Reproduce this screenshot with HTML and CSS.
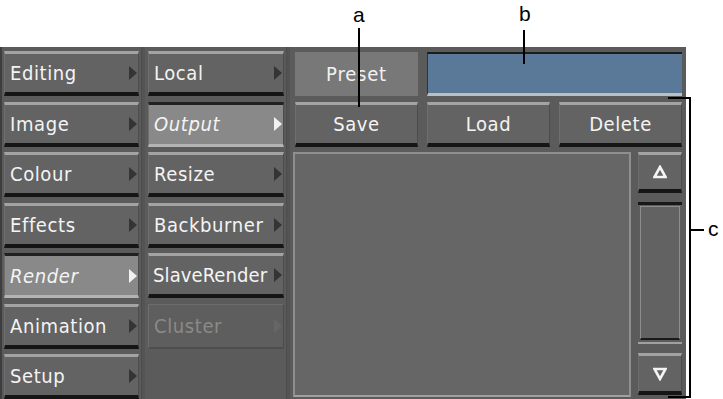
FILE: index.html
```html
<!DOCTYPE html>
<html lang="en">
<head>
  <meta charset="UTF-8">
  <meta name="viewport" content="width=device-width, initial-scale=1.0">
  <title>Output Presets</title>
  <link rel="stylesheet" href="styles.css">
</head>

<body>
  <div class="figure">
    <div class="panel">
      <div class="menu-col">
        <div class="btn"><span>Editing</span><i class="arrow"></i></div>
        <div class="btn"><span>Image</span><i class="arrow"></i></div>
        <div class="btn"><span>Colour</span><i class="arrow"></i></div>
        <div class="btn"><span>Effects</span><i class="arrow"></i></div>
        <div class="btn selected"><span>Render</span><i class="arrow"></i></div>
        <div class="btn"><span>Animation</span><i class="arrow"></i></div>
        <div class="btn"><span>Setup</span><i class="arrow"></i></div>
      </div>

      <div class="menu-col">
        <div class="btn"><span>Local</span><i class="arrow"></i></div>
        <div class="btn selected"><span>Output</span><i class="arrow"></i></div>
        <div class="btn"><span>Resize</span><i class="arrow"></i></div>
        <div class="btn"><span>Backburner</span><i class="arrow"></i></div>
        <div class="btn tight"><span>SlaveRender</span><i class="arrow"></i></div>
        <div class="btn disabled"><span>Cluster</span><i class="arrow"></i></div>
      </div>

      <div class="preset-col">
        <div class="preset-row">
          <div class="preset-label">Preset</div>
          <div class="preset-field"></div>
        </div>
        <div class="action-row">
          <div class="btn center"><span>Save</span></div>
          <div class="btn center"><span>Load</span></div>
          <div class="btn center"><span>Delete</span></div>
        </div>
        <div class="list-row">
          <div class="preset-list"></div>
          <div class="scroll">
            <div class="btn center">
              <svg width="14" height="14" viewBox="0 0 14 14"><path d="M7 2 L12.5 12 L1.5 12 Z" fill="none" stroke="#f4f4f4" stroke-width="2.6" stroke-linejoin="miter"/></svg>
            </div>
            <div class="scroll-track"><div class="scroll-thumb"></div></div>
            <div class="btn center">
              <svg width="14" height="14" viewBox="0 0 14 14"><path d="M1.5 2 L12.5 2 L7 12 Z" fill="none" stroke="#f4f4f4" stroke-width="2.6" stroke-linejoin="miter"/></svg>
            </div>
          </div>
        </div>
      </div>
    </div>

    <!-- callouts -->
    <span class="callout callout-a">a</span>
    <span class="leader leader-a"></span>
    <span class="callout callout-b">b</span>
    <span class="leader leader-b"></span>
    <span class="bracket"></span>
    <span class="leader leader-c"></span>
    <span class="callout callout-c">c</span>
  </div>
</body>
</html>
```

FILE: styles.css
```css
body {
  margin: 0;
  background-color: #fff;
  font-family: "DejaVu Sans Condensed", "DejaVu Sans", sans-serif;
}

.figure {
  position: relative;
  width: 723px;
  height: 399px;
  overflow: hidden;
}

.panel {
  margin-top: 47px;
  width: 686px;
  height: 352px;
  box-sizing: border-box;
  background-color: #5b5b5b;
  border-left: 2px solid #3e3e3e;
  padding: 4px 4px 0 2px;
  display: grid;
  grid-template-columns: 135px 136px 1fr;
  column-gap: 9px;
}

.menu-col {
  display: grid;
  grid-template-rows: repeat(7, 45px);
  grid-template-columns: minmax(0, 1fr);
  row-gap: 5.5px;
  position: relative;
}

.menu-col::after {
  content: '';
  position: absolute;
  top: -4px;
  bottom: 0;
  right: -6px;
  width: 3px;
  background-color: #545454;
  border-left: 1px solid #4c4c4c;
}

.btn {
  box-sizing: border-box;
  min-width: 0;
  height: 45px;
  display: flex;
  align-items: center;
  justify-content: space-between;
  padding: 0 1px 0 5px;
  background-color: #636363;
  border-top: 3px solid #a3a3a3;
  border-bottom: 4px solid #151515;
  border-left: 1px solid #6e6e6e;
  border-right: 1px solid #4c4c4c;
  color: #f4f4f4;
  font-size: 20px;
  letter-spacing: 0.6px;
  white-space: nowrap;
  overflow: hidden;
}

.btn.tight {
  letter-spacing: 0.1px;
  padding-left: 4px;
}

.btn.center {
  justify-content: center;
  padding: 0;
}

.btn.selected {
  background-color: #898989;
  border-top: 3px solid #202020;
  border-bottom: 3px solid #b4b4b4;
  font-style: italic;
}

.btn.disabled {
  background-color: #5e5e5e;
  border-top: 1px solid #6c6c6c;
  border-bottom: 2px solid #4e4e4e;
  color: #8a8a8a;
}

.arrow {
  flex-shrink: 0;
  width: 0;
  height: 0;
  border-left: 8px solid #343434;
  border-top: 7px solid transparent;
  border-bottom: 7px solid transparent;
}

.selected .arrow {
  border-left-color: #f2f2f2;
}

.disabled .arrow {
  border-left-color: #666;
}

.preset-col {
  display: grid;
  grid-template-rows: 44px 45px 1fr;
  row-gap: 5.5px;
  margin-top: 1px;
}

.preset-row,
.action-row {
  display: grid;
  grid-template-columns: 1fr 1fr 1fr;
  column-gap: 9px;
  padding-left: 2px;
}

.preset-label {
  display: flex;
  align-items: center;
  justify-content: center;
  background-color: #787878;
  color: #f2f2f2;
  font-size: 20px;
  letter-spacing: 0.8px;
}

.preset-field {
  grid-column: span 2;
  box-sizing: border-box;
  background-color: #5a7998;
  border-top: 2px solid #1c1c1c;
  border-bottom: 3px solid #b9c0c4;
  border-left: 1px solid #333;
}

.list-row {
  display: grid;
  grid-template-columns: 338px 1fr;
  column-gap: 7px;
  height: 245px;
}

.preset-list {
  box-sizing: border-box;
  background-color: #666;
  border: 2px solid #8f8f8f;
  border-bottom-color: #a0a0a0;
}

.scroll {
  display: grid;
  grid-template-rows: 41px 1fr 42px;
  row-gap: 9px;
  padding-bottom: 2px;
}

.scroll .btn {
  height: auto;
}

.scroll-track {
  box-sizing: border-box;
  background-color: #5c5c5c;
  border-top: 3px solid #181818;
  border-bottom: 2px solid #a0a0a0;
  padding: 1px 2px 2px 2px;
  display: flex;
}

.scroll-thumb {
  flex: 1;
  background-color: #626262;
  border: 1px solid #8c8c8c;
  border-bottom: 2px solid #1a1a1a;
}

.callout {
  position: absolute;
  font-family: "Liberation Sans", Arial, sans-serif;
  font-size: 21px;
  line-height: 1;
  color: #000;
}

.callout-a { left: 353px; top: 4px; }
.callout-b { left: 519px; top: 3px; }
.callout-c { left: 708px; top: 218px; }

.leader {
  position: absolute;
  background-color: #000;
}

.leader-a { left: 358px; top: 28px; width: 2px; height: 79px; }
.leader-b { left: 523px; top: 30px; width: 2px; height: 34px; }
.leader-c { left: 690px; top: 229px; width: 14px; height: 2px; }

.bracket {
  position: absolute;
  left: 668px;
  top: 97px;
  width: 21px;
  height: 297px;
  border: 2px solid #000;
  border-left: none;
}
```
